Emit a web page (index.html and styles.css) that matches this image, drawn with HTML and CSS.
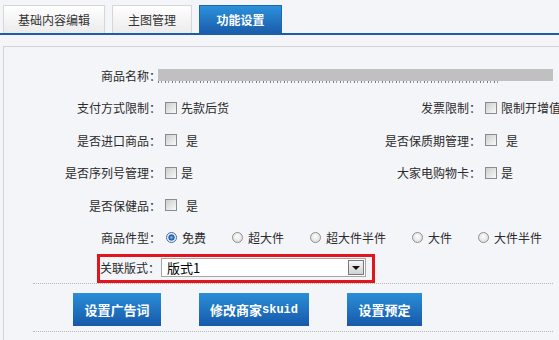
FILE: index.html
```html
<!DOCTYPE html>
<html lang="zh-CN">
<head>
<meta charset="utf-8">
<title>功能设置</title>
<link rel="stylesheet" href="styles.css">
</head>
<body>
<div class="tabs">
  <div class="tab tab-1">基础内容编辑</div>
  <div class="tab tab-2">主图管理</div>
  <div class="tab tab-3 active">功能设置</div>
</div>
<div class="panel">
  <div class="row">
    <div class="cell">
      <span class="lbl">商品名称：</span>
      <span class="blur"></span>
    </div>
  </div>
  <div class="row">
    <div class="cell cell-l">
      <span class="lbl">支付方式限制：</span>
      <span class="cb"></span><span class="opt">先款后货</span>
    </div>
    <div class="cell cell-r">
      <span class="lbl">发票限制：</span>
      <span class="cb"></span><span class="opt">限制开增值税发票</span>
    </div>
  </div>
  <div class="row">
    <div class="cell cell-l">
      <span class="lbl">是否进口商品：</span>
      <span class="cb"></span><span class="opt opt-sp">是</span>
    </div>
    <div class="cell cell-r">
      <span class="lbl">是否保质期管理：</span>
      <span class="cb"></span><span class="opt opt-sp">是</span>
    </div>
  </div>
  <div class="row">
    <div class="cell cell-l">
      <span class="lbl">是否序列号管理：</span>
      <span class="cb"></span><span class="opt">是</span>
    </div>
    <div class="cell cell-r">
      <span class="lbl">大家电购物卡：</span>
      <span class="cb"></span><span class="opt">是</span>
    </div>
  </div>
  <div class="row">
    <div class="cell cell-l">
      <span class="lbl">是否保健品：</span>
      <span class="cb"></span><span class="opt opt-sp">是</span>
    </div>
  </div>
  <div class="row">
    <div class="cell">
      <span class="lbl">商品件型：</span>
      <div class="radios">
        <span class="ri"><span class="rd on"></span><span class="rt">免费</span></span>
        <span class="ri"><span class="rd"></span><span class="rt">超大件</span></span>
        <span class="ri"><span class="rd"></span><span class="rt">超大件半件</span></span>
        <span class="ri"><span class="rd"></span><span class="rt">大件</span></span>
        <span class="ri"><span class="rd"></span><span class="rt">大件半件</span></span>
      </div>
    </div>
  </div>
  <div class="row-sel">
    <div class="hl">
      <span class="sel-lbl">关联版式：</span>
      <div class="select">
        <span class="sel-text">版式1</span>
        <span class="sel-btn"><span class="tri"></span></span>
      </div>
    </div>
  </div>
  <div class="row-btn">
    <div class="btn btn-1">设置广告词</div>
    <div class="btn btn-2">修改商家<span class="mono">skuid</span></div>
    <div class="btn btn-3">设置预定</div>
  </div>
</div>
</body>
</html>
```
FILE: styles.css
```css
* { box-sizing: border-box; }

body {
  margin: 0;
  width: 559px;
  height: 340px;
  overflow: hidden;
  background: #f4f5f9;
  font-family: "Noto Sans CJK SC", "Liberation Sans", sans-serif;
  font-size: 12px;
  color: #2b2b2b;
}

.tabs {
  display: flex;
  gap: 7px;
  height: 35px;
  padding: 5px 0 0 3px;
  border-bottom: 2px solid #1d5ca8;
}

.tab {
  height: 28px;
  border: 1px solid #d6d6d6;
  border-bottom: none;
  background: linear-gradient(#ffffff, #ebebeb);
  display: flex;
  align-items: center;
  justify-content: center;
  color: #333;
}
.tab-1 { width: 102px; }
.tab-2 { width: 80px; }
.tab-3 { width: 83px; }
.tab.active {
  background: linear-gradient(#2c91db, #1a5dab);
  border-color: #1f66b3;
  color: #fff;
  font-weight: bold;
}

.panel {
  margin: 11px 0 0 3px;
  height: 294px;
  padding-top: 12px;
  border: 1px solid #d2d2d2;
  border-right: none;
  border-bottom: none;
}

.row {
  display: flex;
  align-items: center;
  height: 32.5px;
}

.cell {
  flex: none;
  display: flex;
  align-items: center;
  white-space: nowrap;
}
.cell-l { width: 326px; }

.lbl {
  width: 157px;
  text-align: right;
  flex: none;
}
.cell-r .lbl { width: 151px; }

.blur {
  position: relative;
  margin-left: -3px;
  width: 395px;
  height: 12px;
  background: #c0c0c0;
}
.blur::after {
  content: "";
  position: absolute;
  left: 0;
  top: 12px;
  width: 340px;
  height: 2px;
  background: repeating-linear-gradient(90deg, #777 0 1px, transparent 1px 3px, #999 3px 4px, transparent 4px 7px);
}

.cb {
  flex: none;
  width: 12px;
  height: 12px;
  margin-left: 4px;
  border: 1px solid #8c8c8c;
  background: linear-gradient(135deg, #cdcdcd, #f9f9f9);
}

.opt { margin-left: 4px; }
.opt-sp { margin-left: 9px; }

.radios {
  display: flex;
  align-items: center;
  margin-left: 5px;
}
.ri {
  display: flex;
  align-items: center;
  margin-right: 26px;
}
.rd {
  flex: none;
  width: 11px;
  height: 11px;
  border-radius: 50%;
  border: 1px solid #8e8e8e;
  background: radial-gradient(circle at 50% 40%, #ffffff, #d4d4d4);
}
.rd.on {
  border-color: #4d6b90;
  background: radial-gradient(circle at 50% 50%, #7cc6ff 0, #1b5cb3 2.4px, #1b5cb3 2.8px, #dfe6ee 3.4px, #ffffff 5px);
}
.rt { margin-left: 5px; }

.row-sel {
  display: flex;
  align-items: flex-start;
  width: 520px;
  height: 30px;
  margin-left: 29px;
  border-bottom: 1px dotted #b8b8b8;
}

.hl {
  display: flex;
  align-items: flex-start;
  width: 278px;
  height: 29px;
  margin-left: 64px;
  border: 3px solid #e3141b;
}
.sel-lbl {
  width: 60px;
  line-height: 22px;
}
.select {
  display: flex;
  align-items: center;
  justify-content: space-between;
  width: 205px;
  height: 19px;
  margin: 1px 0 0 1px;
  border: 1px solid #a6a6a6;
  background: #fff;
}
.sel-text {
  margin-left: 5px;
  font-size: 13px;
  color: #000;
}
.sel-btn {
  display: flex;
  align-items: center;
  justify-content: center;
  width: 16px;
  height: 15px;
  margin-right: 1px;
  border: 1px solid #7a7a7a;
  background: linear-gradient(#f7f7f7, #d2d2d2);
}
.tri {
  width: 0;
  height: 0;
  border-left: 4px solid transparent;
  border-right: 4px solid transparent;
  border-top: 4px solid #111;
}

.row-btn {
  display: flex;
  gap: 38px;
  width: 520px;
  height: 48px;
  margin-left: 29px;
  padding: 9px 0 0 40px;
  border-bottom: 1px dotted #b8b8b8;
}

.btn {
  display: flex;
  align-items: center;
  justify-content: center;
  height: 33px;
  background: linear-gradient(#2a8ed8, #1659a9);
  color: #fff;
  font-size: 13px;
  font-weight: bold;
}
.btn-1 { width: 88px; }
.btn-2 { width: 110px; }
.btn-3 { width: 75px; }

.mono {
  font-family: "Liberation Mono", monospace;
  font-size: 12px;
  font-weight: bold;
}
```
